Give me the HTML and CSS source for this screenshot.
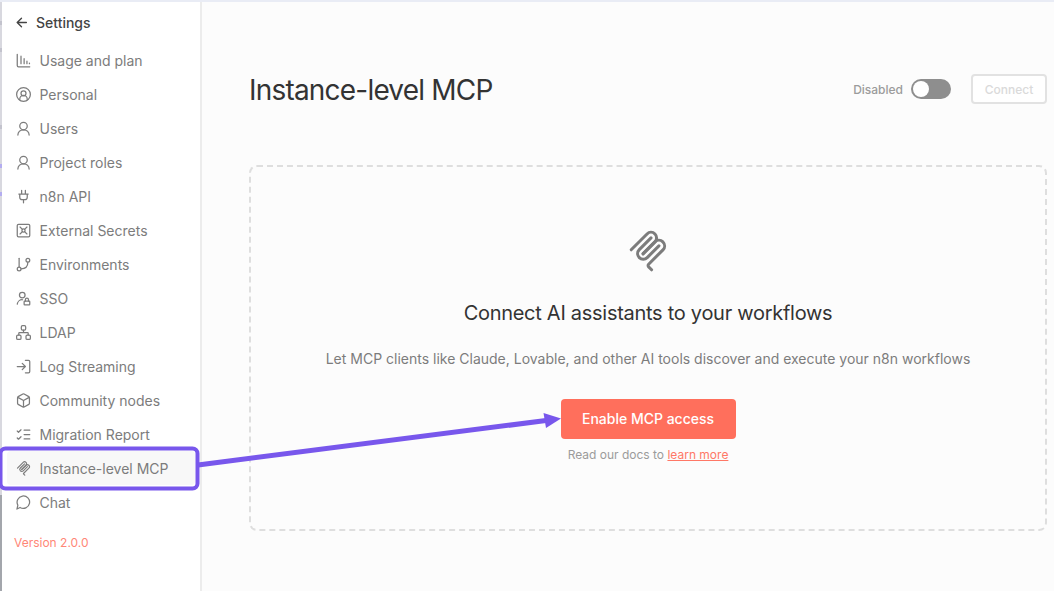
FILE: index.html
```html
<!DOCTYPE html>
<html lang="en">
<head>
<meta charset="UTF-8">
<meta name="viewport" content="width=device-width, initial-scale=1.0">
<title>Instance-level MCP</title>
<link rel="stylesheet" href="styles.css">
</head>
<body>
    <!-- MCP logo, used in the menu and in the empty state -->
    <svg class="defs">
        <symbol id="mcp" viewBox="0 0 180 180">
            <path d="M18 84.85L85.88 16.97C95.25 7.6 110.45 7.6 119.82 16.97C129.2 26.34 129.2 41.54 119.82 50.91L68.56 102.18"/>
            <path d="M69.27 101.47L119.82 50.91C129.2 41.54 144.39 41.54 153.77 50.91L154.12 51.27C163.49 60.64 163.49 75.83 154.12 85.21L92.72 146.6C89.6 149.72 89.6 154.79 92.72 157.91L105.33 170.52"/>
            <path d="M102.85 33.94L52.65 84.15C43.28 93.52 43.28 108.71 52.65 118.09C62.02 127.46 77.22 127.46 86.59 118.09L136.79 67.88"/>
        </symbol>
        <symbol id="user" viewBox="0 0 24 24">
            <circle cx="12" cy="8" r="6"/>
            <path d="M3 22.500c0-5 4-8.500 9-8.500s9 3.500 9 8.500"/>
        </symbol>
    </svg>

    <div class="edge">
        <span class="tick tick-1"></span>
        <span class="tick tick-2"></span>
        <span class="tick tick-3"></span>
        <span class="tick tick-4 purple"></span>
        <span class="tick tick-5 purple"></span>
    </div>

    <nav class="sidebar">
        <div class="back">
            <svg class="back-icon" viewBox="0 0 24 24"><path d="M12 20l-8-8 8-8M4 12h17"/></svg>
            <span>Settings</span>
        </div>
        <ul class="menu">
            <li><svg viewBox="0 0 24 24"><path d="M2 2v18a2 2 0 0 0 2 2h18M8 17V5M13 17V9M17.500 17v-4M21.500 17v-1"/></svg>Usage and plan</li>
            <li><svg viewBox="0 0 24 24"><circle cx="12" cy="12" r="11"/><circle cx="12" cy="10" r="4"/><path d="M6 20.500v-1a6 6 0 0 1 12 0v1"/></svg>Personal</li>
            <li><svg><use href="#user"/></svg>Users</li>
            <li><svg><use href="#user"/></svg>Project roles</li>
            <li><svg viewBox="0 0 24 24"><path d="M12 22v-5M9 8V2M15 8V2M4.500 8h15M18 8v5a4 4 0 0 1-4 4h-4a4 4 0 0 1-4-4V8"/></svg>n8n API</li>
            <li><svg viewBox="0 0 24 24"><rect x="2" y="2" width="20" height="20" rx="2"/><circle cx="12" cy="12" r="2.500"/><path d="M6.500 6.500l3.700 3.700M17.500 6.500l-3.700 3.700M6.500 17.500l3.700-3.700M17.500 17.500l-3.700-3.700"/></svg>External Secrets</li>
            <li><svg viewBox="0 0 24 24"><path d="M5 2v14"/><circle cx="19" cy="5" r="3"/><circle cx="5" cy="19" r="3"/><path d="M19 8c0 7-4 11-11 11"/></svg>Environments</li>
            <li><svg viewBox="0 0 24 24"><circle cx="10" cy="6.500" r="4.500"/><path d="M2 21a8 8 0 0 1 8.500-7"/><rect x="13" y="16" width="9" height="6" rx="1"/><path d="M15 16v-2a2.500 2.500 0 0 1 5 0v2"/></svg>SSO</li>
            <li><svg viewBox="0 0 24 24"><rect x="16" y="16" width="7" height="7" rx="2"/><rect x="1" y="16" width="7" height="7" rx="2"/><rect x="8.500" y="1" width="7" height="7" rx="2"/><path d="M4.500 16v-3a1 1 0 0 1 1-1h13a1 1 0 0 1 1 1v3M12 12V8"/></svg>LDAP</li>
            <li><svg viewBox="0 0 24 24"><path d="M10 17l5-5-5-5M15 12H2M15 2h5a2 2 0 0 1 2 2v16a2 2 0 0 1-2 2h-5"/></svg>Log Streaming</li>
            <li><svg viewBox="0 0 24 24"><path d="M21.500 7.500a2 2 0 0 0-1-1.700l-7.500-4.300a2 2 0 0 0-2 0L3.500 5.800a2 2 0 0 0-1 1.700v9a2 2 0 0 0 1 1.700l7.500 4.300a2 2 0 0 0 2 0l7.500-4.300a2 2 0 0 0 1-1.700zM3 7l9 5 9-5M12 22.500V12"/></svg>Community nodes</li>
            <li><svg viewBox="0 0 24 24"><path d="M13 5h9M13 12h9M13 19h9M2 17.500l2 2 4-4M2 6.500l2 2 4-4"/></svg>Migration Report</li>
            <li class="active"><svg class="mcp-icon"><use href="#mcp"/></svg>Instance-level MCP</li>
            <li><svg viewBox="0 0 24 24"><path d="M6.500 20A10 10 0 1 0 3 16.300L1.500 22.500z"/></svg>Chat</li>
        </ul>
        <a class="version">Version 2.0.0</a>
    </nav>

    <main class="content">
        <header class="header">
            <h1>Instance-level MCP</h1>
            <div class="actions">
                <span class="status">Disabled</span>
                <span class="toggle"></span>
                <button class="connect" disabled>Connect</button>
            </div>
        </header>

        <section class="empty">
            <svg class="empty-icon"><use href="#mcp"/></svg>
            <h2>Connect AI assistants to your workflows</h2>
            <p class="description">Let MCP clients like Claude, Lovable, and other AI tools discover and execute your n8n workflows</p>
            <button class="enable">Enable MCP access</button>
            <p class="docs">Read our docs to <a>learn more</a></p>
        </section>
    </main>

    <!-- Callout around the menu item with an arrow to the button -->
    <svg class="callout" viewBox="0 0 1054 591">
        <rect x="0.500" y="448.500" width="197" height="40" rx="5"/>
        <path d="M198 465L546 420.500"/>
        <polygon points="543.500,413 561,418.500 546,428"/>
    </svg>
</body>
</html>
```

FILE: styles.css
```css
* {
    box-sizing: border-box;
}

body {
    margin: 0;
    height: 591px;
    display: flex;
    overflow: hidden;
    position: relative;
    border-top: 2px solid #e9ecf5;
    background: #fcfcfc;
    color: #7c7c7c;
    font-family: Inter, "Liberation Sans", sans-serif;
}

h1, h2, p, ul {
    margin: 0;
    padding: 0;
    font-weight: 400;
}

svg {
    fill: none;
    stroke: currentColor;
    stroke-width: 2;
    stroke-linecap: round;
    stroke-linejoin: round;
}

.defs {
    position: absolute;
    width: 0;
    height: 0;
}

/* Sliver of the page behind the settings window */
.edge {
    position: relative;
    width: 2px;
    flex: none;
    background: linear-gradient(#d8d8df 0 493px, #a3a6ac 493px);
}

.tick {
    position: absolute;
    left: 0;
    width: 2px;
    height: 4px;
    background: #c3c3cd;
}

.tick.purple {
    background: #b4adf0;
}

.tick-1 { top: 19px; }
.tick-2 { top: 46px; }
.tick-3 { top: 123px; }
.tick-4 { top: 162px; }
.tick-5 { top: 190px; }

/* Sidebar */
.sidebar {
    width: 200px;
    flex: none;
    padding: 8px 5px 0;
    background: #fff;
    border-right: 2px solid #ececec;
}

.back {
    display: flex;
    align-items: center;
    gap: 8px;
    height: 24px;
    padding-left: 8px;
    color: #444;
    font-size: 14px;
    font-weight: 500;
}

.back-icon {
    width: 13px;
    height: 13px;
    stroke-width: 2.5;
}

.menu {
    list-style: none;
    padding-top: 9px;
}

.menu li {
    display: flex;
    align-items: center;
    gap: 8.5px;
    height: 34px;
    padding-left: 9px;
    border-radius: 4px;
    font-size: 14px;
    white-space: nowrap;
}

.menu li.active {
    background: #f8f8f8;
}

.menu svg {
    width: 15px;
    height: 15px;
    flex: none;
}

.menu .mcp-icon {
    stroke-width: 14;
}

.version {
    display: block;
    padding: 14px 0 0 7px;
    color: #ff8777;
    font-size: 12px;
    line-height: 19px;
}

/* Main area */
.content {
    flex: 1;
    padding: 67px 7px 0 47px;
}

.header {
    display: flex;
    align-items: center;
    justify-content: space-between;
    height: 40px;
}

h1 {
    padding-top: 1px;
    color: #333;
    font-size: 28px;
    letter-spacing: -0.8px;
}

.actions {
    display: flex;
    align-items: center;
}

.status {
    color: #9b9b9b;
    font-size: 12px;
    font-weight: 500;
}

.toggle {
    width: 40px;
    height: 20px;
    margin: 0 20px 0 8px;
    padding: 2px;
    border-radius: 10px;
    background: #8e8e8e;
}

.toggle::before {
    content: "";
    display: block;
    width: 16px;
    height: 16px;
    border-radius: 50%;
    background: #fff;
}

button {
    font-family: inherit;
    font-weight: 500;
    border-radius: 4px;
}

.connect {
    width: 76px;
    height: 30px;
    padding: 0;
    border: 2px solid #e2e2e2;
    background: #fff;
    color: #dadada;
    font-size: 12px;
}

.empty {
    display: flex;
    flex-direction: column;
    align-items: center;
    height: 366px;
    margin-top: 55.5px;
    padding-top: 63px;
    border: 2px dashed #dedede;
    border-radius: 8px;
}

.empty-icon {
    width: 42px;
    height: 42px;
    stroke-width: 13;
}

h2 {
    margin-top: 28px;
    color: #333;
    font-size: 20px;
    line-height: 26px;
    letter-spacing: -0.28px;
}

.description {
    margin-top: 23px;
    font-size: 14px;
    line-height: 20px;
}

.enable {
    width: 175px;
    height: 40px;
    margin-top: 30px;
    padding: 0;
    border: none;
    background: #ff6f5c;
    color: #fff;
    font-size: 14px;
}

.docs {
    margin-top: 7.5px;
    color: #9b9b9b;
    font-size: 12px;
    line-height: 18px;
}

.docs a {
    color: #ff7866;
    text-decoration: underline;
}

/* Callout */
.callout {
    position: absolute;
    top: -2px;
    left: 0;
    width: 1054px;
    height: 591px;
    stroke: #7857ec;
    stroke-width: 4;
    pointer-events: none;
}

.callout path {
    stroke-width: 5;
    stroke-linecap: butt;
}

.callout polygon {
    fill: #7857ec;
    stroke: none;
}
```
